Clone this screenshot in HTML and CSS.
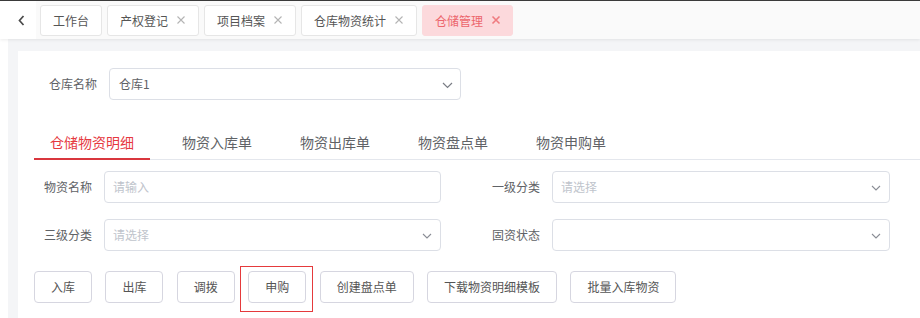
FILE: index.html
```html
<html>
<head>
<meta http-equiv="Content-Type" content="text/html; charset=UTF-8">
<link rel="stylesheet" href="styles.css">
</head>
<body>
<div class="tagsbar">
  <div class="tags-back">
    <svg width="7" height="11" viewBox="0 0 7 11"><polyline points="5.5,1 1.5,5.5 5.5,10" fill="none" stroke="#4a4a4a" stroke-width="1.7"/></svg>
  </div>
  <div class="tags-list">
    <span class="tag">工作台</span>
    <span class="tag">产权登记<svg class="tag-close" width="10" height="10" viewBox="0 0 10 10"><path d="M1.5 1.5L8.5 8.5M8.5 1.5L1.5 8.5" stroke="currentColor" stroke-width="1.1"/></svg></span>
    <span class="tag">项目档案<svg class="tag-close" width="10" height="10" viewBox="0 0 10 10"><path d="M1.5 1.5L8.5 8.5M8.5 1.5L1.5 8.5" stroke="currentColor" stroke-width="1.1"/></svg></span>
    <span class="tag">仓库物资统计<svg class="tag-close" width="10" height="10" viewBox="0 0 10 10"><path d="M1.5 1.5L8.5 8.5M8.5 1.5L1.5 8.5" stroke="currentColor" stroke-width="1.1"/></svg></span>
    <span class="tag tag--active">仓储管理<svg class="tag-close" width="10" height="10" viewBox="0 0 10 10"><path d="M1.5 1.5L8.5 8.5M8.5 1.5L1.5 8.5" stroke="currentColor" stroke-width="1.6"/></svg></span>
  </div>
</div>

<div class="app-main">
  <div class="card">
    <div class="warehouse-row">
      <span class="warehouse-label">仓库名称</span>
      <div class="select select--wide">
        <span class="select-value">仓库1</span>
        <svg class="select-arrow" width="11" height="7" viewBox="0 0 11 7"><polyline points="1,1 5.5,5.5 10,1" fill="none" stroke="#7a7d85" stroke-width="1.2"/></svg>
      </div>
    </div>

    <div class="tabs-nav">
      <div class="tabs-item tabs-item--active">仓储物资明细</div>
      <div class="tabs-item">物资入库单</div>
      <div class="tabs-item">物资出库单</div>
      <div class="tabs-item">物资盘点单</div>
      <div class="tabs-item">物资申购单</div>
    </div>

    <div class="filter-grid">
      <div class="field">
        <span class="field-label">物资名称</span>
        <div class="select"><span class="placeholder">请输入</span></div>
      </div>
      <div class="field">
        <span class="field-label">一级分类</span>
        <div class="select"><span class="placeholder">请选择</span>
          <svg class="select-arrow" width="10" height="6" viewBox="0 0 10 6"><polyline points="1,1 5,5 9,1" fill="none" stroke="#8a8d95" stroke-width="1.1"/></svg>
        </div>
      </div>
      <div class="field">
        <span class="field-label">三级分类</span>
        <div class="select"><span class="placeholder">请选择</span>
          <svg class="select-arrow" width="10" height="6" viewBox="0 0 10 6"><polyline points="1,1 5,5 9,1" fill="none" stroke="#8a8d95" stroke-width="1.1"/></svg>
        </div>
      </div>
      <div class="field">
        <span class="field-label">固资状态</span>
        <div class="select"><span class="placeholder"></span>
          <svg class="select-arrow" width="10" height="6" viewBox="0 0 10 6"><polyline points="1,1 5,5 9,1" fill="none" stroke="#8a8d95" stroke-width="1.1"/></svg>
        </div>
      </div>
    </div>

    <div class="toolbar">
      <button class="btn">入库</button>
      <button class="btn">出库</button>
      <button class="btn">调拨</button>
      <button class="btn btn--marked">申购</button>
      <button class="btn">创建盘点单</button>
      <button class="btn">下载物资明细模板</button>
      <button class="btn">批量入库物资</button>
    </div>
  </div>
</div>
</body>
</html>
```

FILE: styles.css
```css
body {
    margin: 0;
    font-family: "Noto Sans CJK SC", "Noto Sans", sans-serif;
    color: #606266;
    background: #fff;
    overflow: hidden;
    height: 100vh;
}

/* tags bar */
.tagsbar {
    display: flex;
    height: 38px;
    border-top: 1px solid #3a3a3a;
    background: #fafafa;
    box-shadow: 0 1px 3px rgba(0, 0, 0, 0.08);
    position: relative;
    z-index: 1;
}
.tags-back {
    width: 36px;
    background: #fff;
    display: flex;
    align-items: center;
    justify-content: center;
    padding-left: 6px;
    box-sizing: border-box;
}
.tags-list {
    display: flex;
    gap: 5px;
    padding: 4px 0 0 4px;
}
.tag {
    display: flex;
    align-items: center;
    height: 31px;
    box-sizing: border-box;
    padding: 0 12px 1px;
    border: 1px solid #e6e6e6;
    border-radius: 3px;
    background: #fff;
    font-size: 12px;
    color: #555;
}
.tag-close {
    margin-left: 8px;
    color: #b4b4b4;
}
.tag--active {
    background: #fcd9dc;
    border-color: #fcd9dc;
    color: #ec666c;
    padding-right: 11px;
}
.tag--active .tag-close {
    color: #ef7b80;
}

/* main */
.app-main {
    margin-left: 8px;
    padding: 12px 0 0 10px;
    background: #f4f5f7;
    height: calc(100vh - 39px);
    box-sizing: border-box;
    overflow: hidden;
}
.card {
    background: #fff;
    padding: 17px 0 0 16px;
    height: 100%;
    box-sizing: border-box;
}

.warehouse-row {
    display: flex;
    align-items: center;
}
.warehouse-label {
    width: 63px;
    margin-right: 12px;
    margin-bottom: 2px;
    text-align: right;
    font-size: 12px;
}

.select {
    position: relative;
    display: flex;
    align-items: center;
    height: 32px;
    box-sizing: border-box;
    border: 1px solid #dcdfe6;
    border-radius: 4px;
    padding: 0 8px 2px;
    font-size: 12px;
    flex: 1;
}
.select--wide {
    flex: none;
    width: 352px;
}
.select-value {
    padding-left: 1px;
    color: #606266;
}
.placeholder {
    color: #c0c4cc;
}
.select-arrow {
    position: absolute;
    right: 8px;
    top: 13px;
}
.select--wide .select-arrow {
    right: 7px;
    top: 13px;
}

/* tabs */
.tabs-nav {
    display: flex;
    gap: 16px;
    margin-top: 24px;
    height: 36px;
    box-shadow: inset 0 -1px 0 #e4e7ed;
}
.tabs-item {
    padding: 0 16px;
    line-height: 36px;
    font-size: 14px;
    color: #606266;
}
.tabs-item--active {
    color: #e6393f;
    box-shadow: inset 0 -2px 0 #d9363e;
}

/* filters */
.filter-grid {
    display: grid;
    grid-template-columns: 407px 408px;
    column-gap: 41px;
    row-gap: 16px;
    margin-top: 11px;
}
.field {
    display: flex;
    align-items: center;
}
.field-label {
    width: 58px;
    margin-right: 12px;
    margin-bottom: 2px;
    text-align: right;
    font-size: 12px;
}

/* buttons */
.toolbar {
    display: flex;
    gap: 13.4px;
    margin-top: 20px;
}
.btn {
    height: 32px;
    padding: 0 16px 1px;
    border: 1px solid #d6d6e0;
    border-radius: 4px;
    background: #fff;
    font-family: inherit;
    font-size: 12px;
    color: #555;
}
.btn--marked {
    position: relative;
}
.btn--marked::after {
    content: "";
    position: absolute;
    left: -9px;
    right: -8px;
    top: -6px;
    bottom: -10px;
    border: 1px solid #e53a3c;
}
```
